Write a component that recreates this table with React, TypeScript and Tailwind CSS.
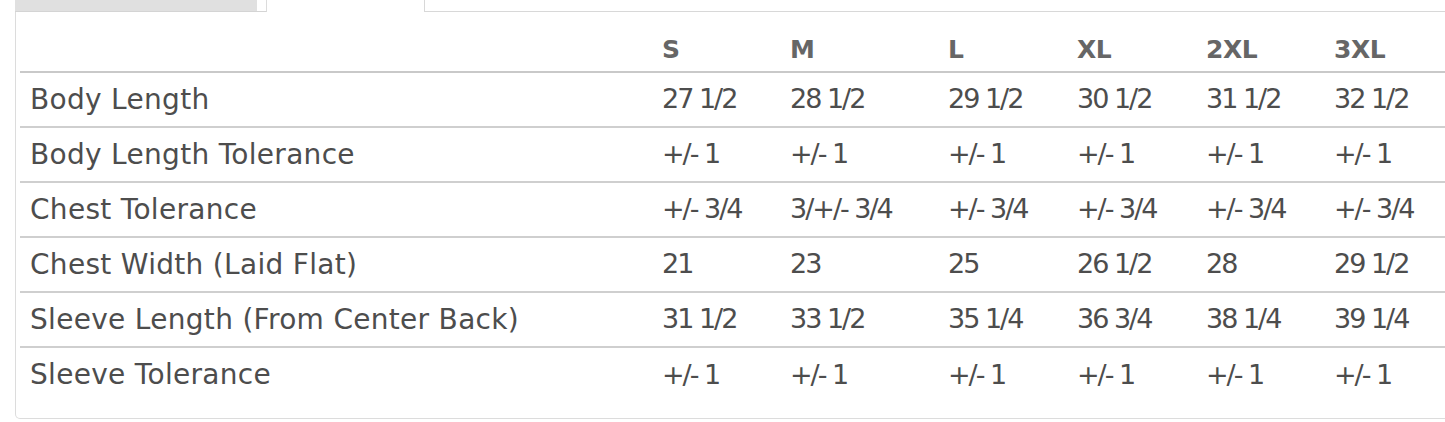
const sizes = ['S', 'M', 'L', 'XL', '2XL', '3XL']

const rows: { label: string; values: string[] }[] = [
    { label: 'Body Length', values: ['27 1/2', '28 1/2', '29 1/2', '30 1/2', '31 1/2', '32 1/2'] },
    { label: 'Body Length Tolerance', values: ['+/- 1', '+/- 1', '+/- 1', '+/- 1', '+/- 1', '+/- 1'] },
    { label: 'Chest Tolerance', values: ['+/- 3/4', '3/+/- 3/4', '+/- 3/4', '+/- 3/4', '+/- 3/4', '+/- 3/4'] },
    { label: 'Chest Width (Laid Flat)', values: ['21', '23', '25', '26 1/2', '28', '29 1/2'] },
    { label: 'Sleeve Length (From Center Back)', values: ['31 1/2', '33 1/2', '35 1/4', '36 3/4', '38 1/4', '39 1/4'] },
    { label: 'Sleeve Tolerance', values: ['+/- 1', '+/- 1', '+/- 1', '+/- 1', '+/- 1', '+/- 1'] },
]

export default function App() {
    return (
        <div className="w-[1445px] h-[422px] overflow-hidden bg-white font-['DejaVu_Sans',sans-serif]">
            {/* tabs */}
            <div className="flex h-[12px] pl-[15px]">
                <div className="w-[242px] bg-[#e0e0e0] border-b border-[#d4d4d4]" />
                <div className="w-[10px] border-r border-[#dcdcdc] border-b border-b-[#d4d4d4]" />
                <div className="w-[157px]" />
                <div className="flex-1 border-l border-b border-[#d8d8d8]" />
            </div>

            {/* panel */}
            <div className="ml-[15px] w-[1460px] h-[407px] border border-t-0 border-[#dcdcdc] rounded-b-[5px] pl-[4px] pt-[16px]">
                <table className="table-fixed w-full border-collapse text-[#4d4d4d]">
                    <colgroup>
                        <col className="w-[632px]" />
                        <col className="w-[128px]" />
                        <col className="w-[158px]" />
                        <col className="w-[129px]" />
                        <col className="w-[129px]" />
                        <col className="w-[128px]" />
                        <col />
                    </colgroup>
                    <thead>
                        <tr className="h-[44px] border-b-2 border-[#c9c9c9]">
                            <th />
                            {sizes.map(s => (
                                <th key={s} className="pl-[10px] text-left text-[25px] font-bold text-[#666] tracking-[-0.5px]">
                                    {s}
                                </th>
                            ))}
                        </tr>
                    </thead>
                    <tbody>
                        {rows.map((row, i) => (
                            <tr key={row.label} className={`h-[55px] ${i < rows.length - 1 ? 'border-b-2 border-[#cfcfcf]' : ''}`}>
                                <td className="pl-[10px] text-[28px] whitespace-nowrap tracking-[0.3px]">{row.label}</td>
                                {row.values.map((v, j) => (
                                    <td key={j} className="pl-[10px] text-[27px] whitespace-nowrap tracking-[-2px]">{v}</td>
                                ))}
                            </tr>
                        ))}
                    </tbody>
                </table>
            </div>
        </div>
    )
}
